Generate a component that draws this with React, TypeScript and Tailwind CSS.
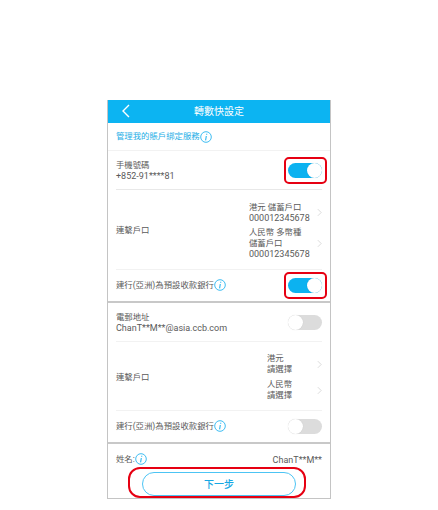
const FONT = "font-['Roboto','Noto_Sans_CJK_TC',sans-serif]"

function Info() {
  return (
    <svg viewBox="0 0 12 12" className="w-[12px] h-[12px] shrink-0" fill="none">
      <circle cx="6" cy="6" r="5.3" stroke="#29b6f0" strokeWidth="0.9" />
      <path d="M6.7 2.8v1M6.3 5 5.6 9.3" stroke="#29b6f0" strokeWidth="1.1" />
    </svg>
  )
}

function Chevron() {
  return (
    <svg viewBox="0 0 6 10" className="w-[5px] h-[9px] shrink-0" fill="none">
      <path d="M1 1l4 4-4 4" stroke="#d4d4d4" strokeWidth="1" />
    </svg>
  )
}

function Toggle({ on, marked }: { on?: boolean; marked?: boolean }) {
  return (
    <div className="relative">
      <div className={`w-[34px] h-[15px] rounded-full flex items-center ${on ? 'bg-[#0cb2f0] justify-end' : 'bg-[#dcdcdc] justify-start'}`}>
        <div className="w-[15px] h-[15px] rounded-full bg-white shadow-[0_0_1px_rgba(0,0,0,0.15)]" />
      </div>
      {marked && <div className="absolute -left-[4px] -top-[6px] w-[43px] h-[27px] border-2 border-[#e60012] rounded-[5px]" />}
    </div>
  )
}

function Choices({ items, w, gap }: { items: string[][]; w: string; gap: string }) {
  return (
    <div className={`flex flex-col ${gap} ${w} pt-[2px]`}>
      {items.map((lines, i) => (
        <div key={i} className="flex items-center justify-between">
          <div className="leading-[11px]">
            {lines.map(l => (
              <div key={l} className={`whitespace-nowrap ${/^\d/.test(l) ? 'text-[9px]' : ''}`}>{l}</div>
            ))}
          </div>
          <Chevron />
        </div>
      ))}
    </div>
  )
}

function DefaultBank({ on, marked }: { on?: boolean; marked?: boolean }) {
  return (
    <div className="h-[31px] flex items-center justify-between">
      <div className="flex items-center">建行(亞洲)為預設收款銀行<Info /></div>
      <Toggle on={on} marked={marked} />
    </div>
  )
}

const Num = ({ children }: { children: string }) => <span className="text-[9px]">{children}</span>

export default function App() {
  return (
    <div className={`w-[438px] h-[510px] bg-white pt-[100px] pl-[107px] ${FONT} text-[8.4px] text-[#5a5a5a]`}>
      <div className="w-[224px] h-[399px] border border-t-0 border-[#c4c4c4] flex flex-col">
        <div className="h-[23px] bg-[#0cb4f2] relative flex items-center justify-center text-white text-[10px]">
          <svg viewBox="0 0 8 14" className="absolute left-[14px] top-[4px] w-[8px] h-[14px]" fill="none">
            <path d="M7 1 1 7l6 6" stroke="#fff" strokeWidth="1.4" />
          </svg>
          轉數快設定
        </div>
        <div className="h-[28px] px-[8px] flex items-center text-[#25aee6] border-b border-[#f2f2f2]">
          管理我的賬戶綁定服務<Info />
        </div>
        <div className="px-[8px]">
          <div className="h-[39px] flex items-center justify-between border-b border-[#e8e8e8]">
            <div className="leading-[11px] pt-[2px]">
              <div>手機號碼</div>
              <div><Num>+852-91****81</Num></div>
            </div>
            <Toggle on marked />
          </div>
          <div className="h-[80px] flex items-center justify-between border-b border-[#f2f2f2]">
            <span className="pt-[2px]">連繫戶口</span>
            <Choices w="w-[73px]" gap="gap-[3px]" items={[['港元 儲蓄戶口', '000012345678'], ['人民幣 多幣種', '儲蓄戶口', '000012345678']]} />
          </div>
          <DefaultBank on marked />
        </div>
        <div className="h-[2px] bg-[#c8c8c8]" />
        <div className="px-[8px]">
          <div className="h-[39px] flex items-center justify-between border-b border-[#f2f2f2]">
            <div className="leading-[11px] pt-[2px]">
              <div>電郵地址</div>
              <div><Num>ChanT**M**@asia.ccb.com</Num></div>
            </div>
            <Toggle />
          </div>
          <div className="h-[69px] flex items-center justify-between border-b border-[#f2f2f2]">
            <span className="pt-[2px]">連繫戶口</span>
            <Choices w="w-[55px]" gap="gap-[4px]" items={[['港元', '請選擇'], ['人民幣', '請選擇']]} />
          </div>
          <DefaultBank />
        </div>
        <div className="h-[2px] bg-[#c8c8c8]" />
        <div className="px-[8px] flex-1 flex flex-col">
          <div className="h-[28px] pt-[2px] flex items-center justify-between">
            <div className="flex items-center">姓名:<Info /></div>
            <span className="pt-[2px] leading-[12px]"><Num>ChanT**M**</Num></span>
          </div>
          <div className="flex justify-center">
            <div className="relative">
              <div className="w-[154px] h-[24px] rounded-full border border-[#4cc4f4] text-[#18a8e4] text-[10px] font-medium flex items-center justify-center">下一步</div>
              <div className="absolute -left-[14px] -top-[5px] w-[178px] h-[31px] border-2 border-[#e60012] rounded-[12px]" />
            </div>
          </div>
        </div>
      </div>
    </div>
  )
}
